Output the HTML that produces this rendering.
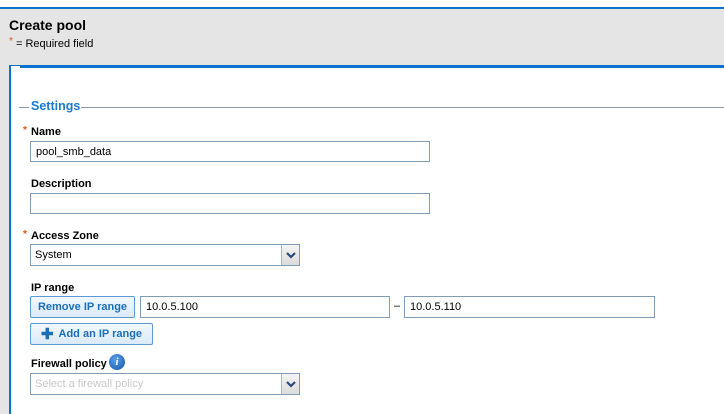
<!DOCTYPE html>
<html><head><style>
*{margin:0;padding:0;box-sizing:border-box}
body{width:724px;height:414px;overflow:hidden;background:#e5e5e5;font-family:"Liberation Sans",Arial,sans-serif;position:relative;color:#000}
.a{position:absolute}
.lbl{position:absolute;left:31px;font-size:11px;font-weight:bold}
.ast{position:absolute;left:23px;color:#d9541e;font-size:10px;font-weight:bold}
.inp{position:absolute;border:1px solid #7f9db9;background:#fff;font-size:11px;padding:0 0 0 5px;display:flex;align-items:center}
.sel{position:absolute;border:1px solid #7f9db9;background:#fff;font-size:11px;padding-left:4px;display:flex;align-items:center}
.arr{position:absolute;right:0;top:0;bottom:0;width:18px;border-left:1px solid #a8b8cc;background:linear-gradient(#f4f4f4,#dcdcdc);display:flex;align-items:center;justify-content:center}
.btn{position:absolute;border:1px solid #5b9bd5;border-radius:2px;background:linear-gradient(#f2f8fe,#dbeaf8);color:#1a6fb8;font-size:11px;font-weight:bold;display:flex;align-items:center;justify-content:center}
</style></head><body>
<div class="a" style="left:0;top:0;width:724px;height:7px;background:#fff"></div>
<div class="a" style="left:0;top:7px;width:724px;height:2px;background:#0a73cc"></div>
<div class="a" style="left:9px;top:17px;font-size:14px;font-weight:bold">Create pool</div>
<div class="a" style="left:9px;top:38px;font-size:11px"><span style="color:#d9541e;font-size:10px;position:relative;top:-3px">*</span> = Required field</div>
<div class="a" style="left:9px;top:65px;width:715px;height:349px;background:#fff"></div>
<div class="a" style="left:9px;top:65px;width:2px;height:349px;background:#0a73cc"></div>
<div class="a" style="left:9px;top:65px;width:715px;height:1px;background:#0a73cc"></div>
<div class="a" style="left:20px;top:66px;width:704px;height:2px;background:#0a73cc"></div>
<div class="a" style="left:19px;top:107px;width:10px;height:1px;background:#8a9bb0"></div>
<div class="a" style="left:81px;top:107px;width:643px;height:1px;background:#8a9bb0"></div>
<div class="a" style="left:31px;top:99px;font-size:12.5px;font-weight:bold;color:#1a7ad0">Settings</div>

<div class="ast" style="top:125px">*</div><div class="lbl" style="top:126px">Name</div>
<div class="inp" style="left:30px;top:141px;width:400px;height:21px">pool_smb_data</div>
<div class="lbl" style="top:178px">Description</div>
<div class="inp" style="left:30px;top:193px;width:400px;height:21px"></div>
<div class="ast" style="top:229px">*</div><div class="lbl" style="top:230px">Access Zone</div>
<div class="sel" style="left:30px;top:244px;width:270px;height:22px">System<div class="arr"><svg width="10" height="7" viewBox="0 0 10 7"><path d="M1 1L5 5L9 1" stroke="#2a4a7a" stroke-width="2.2" fill="none"/></svg></div></div>
<div class="lbl" style="top:282px">IP range</div>
<div class="btn" style="left:30px;top:296px;width:105px;height:22px">Remove IP range</div>
<div class="inp" style="left:140px;top:296px;width:250px;height:22px">10.0.5.100</div>
<div class="a" style="left:394px;top:300px;font-size:11px">–</div>
<div class="inp" style="left:404px;top:296px;width:251px;height:22px">10.0.5.110</div>
<div class="btn" style="left:30px;top:323px;width:123px;height:22px"><span style="font-size:15px;margin-right:5px;line-height:1">✚</span>Add an IP range</div>
<div class="lbl" style="top:358px">Firewall policy</div>
<div class="a" style="left:109px;top:354px;width:16px;height:16px;border-radius:50%;background:radial-gradient(circle at 40% 35%,#5aa0e8,#1456a8);color:#fff;font:bold italic 11px 'Liberation Serif',serif;text-align:center;line-height:16px">i</div>
<div class="sel" style="left:30px;top:373px;width:270px;height:22px;color:#c8c8c8">Select a firewall policy<div class="arr"><svg width="10" height="7" viewBox="0 0 10 7"><path d="M1 1L5 5L9 1" stroke="#2a4a7a" stroke-width="2.2" fill="none"/></svg></div></div>
</body></html>
